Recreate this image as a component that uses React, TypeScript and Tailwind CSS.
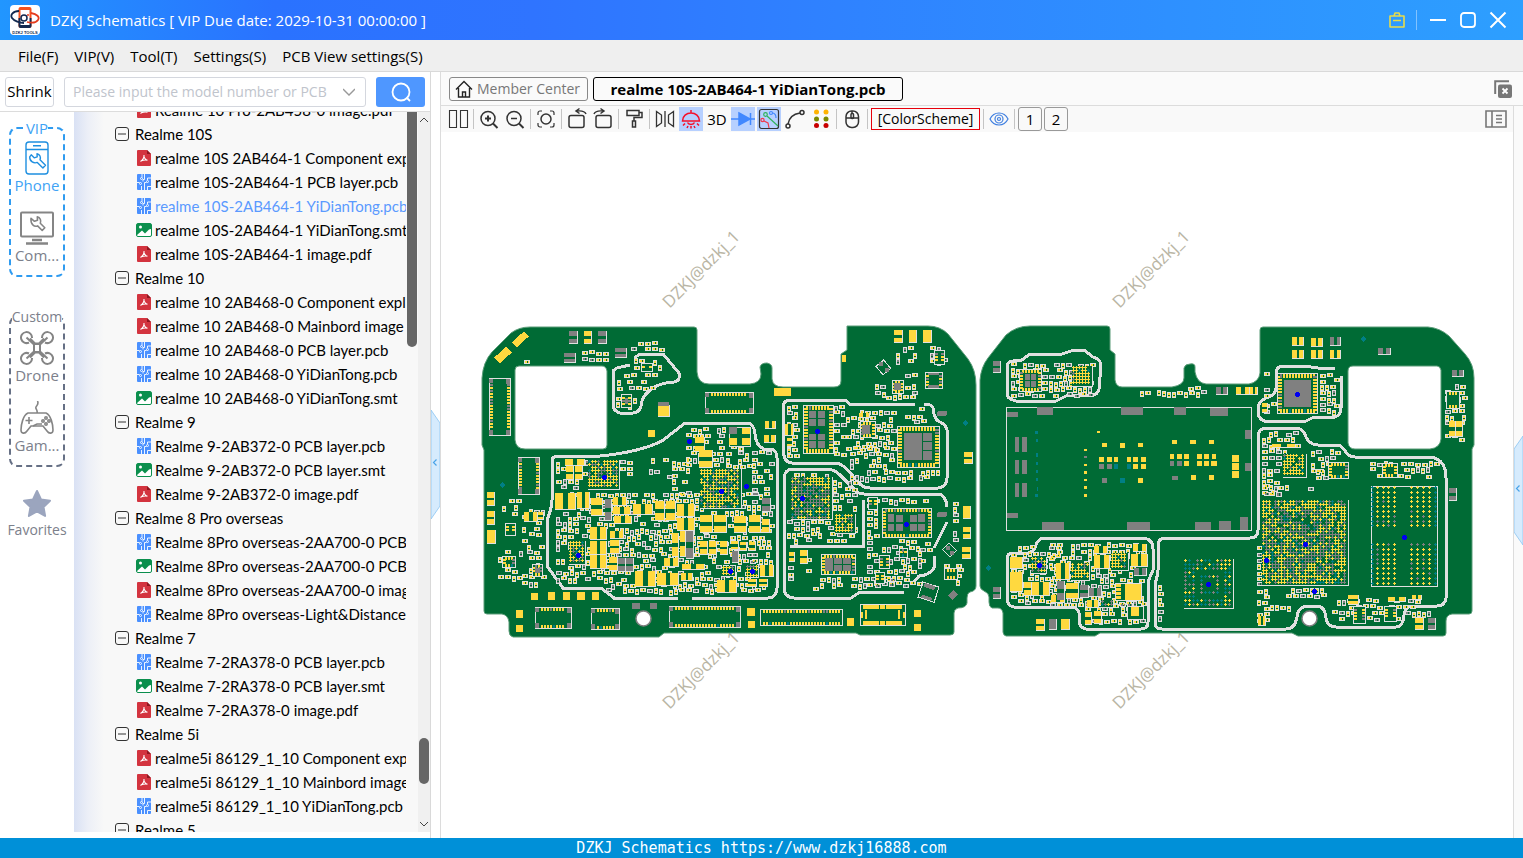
import { ReactNode } from "react";

const GREEN = "#006b35";
const LIGHT = "#e0e0e0";
const GOLD = "#ffd93f";
const GREY = "#808080";
const TEAL = "#007f85";
const LAYERS = [LIGHT, GREEN, GOLD, GREY, TEAL];

type Stage = Record<string, string>;
type Box = [number, number, number, number];

const newStage = (): Stage => ({
  [LIGHT]: "",
  [GREEN]: "",
  [GOLD]: "",
  [GREY]: "",
  [TEAL]: "",
});

function box(s: Stage, fill: string, x: number, y: number, w: number, h: number) {
  s[fill] += `M${x} ${y}h${w}v${h}h${-w}z`;
}

let seed = 7;
function random() {
  seed = (seed * 1664525 + 1013904223) % 4294967296;
  return seed / 4294967296;
}

// fields of tiny resistors and capacitors: x, y, w, h, density
const passives: [number, number, number, number, number][] = [
  [631, 340, 34, 10, 0.8],
  [582, 350, 30, 10, 0.8],
  [517, 353, 15, 9, 0.7],
  [634, 358, 34, 14, 0.7],
  [617, 373, 38, 18, 0.6],
  [616, 390, 20, 20, 0.6],
  [686, 427, 40, 40, 0.7],
  [726, 445, 26, 22, 0.7],
  [752, 450, 20, 140, 0.75],
  [556, 460, 32, 30, 0.6],
  [620, 460, 10, 20, 0.6],
  [632, 450, 40, 28, 0.15],
  [672, 455, 18, 40, 0.5],
  [556, 492, 200, 92, 0.75],
  [606, 582, 156, 13, 0.8],
  [502, 498, 18, 20, 0.5],
  [522, 508, 22, 78, 0.65],
  [498, 550, 26, 30, 0.75],
  [787, 404, 14, 52, 0.8],
  [834, 404, 14, 52, 0.8],
  [800, 455, 30, 6, 0.5],
  [846, 410, 48, 40, 0.7],
  [850, 445, 44, 38, 0.8],
  [900, 407, 28, 16, 0.5],
  [895, 469, 44, 14, 0.8],
  [787, 472, 44, 5, 0.7],
  [787, 520, 72, 24, 0.75],
  [833, 480, 24, 32, 0.7],
  [867, 498, 14, 90, 0.8],
  [882, 498, 50, 8, 0.8],
  [882, 539, 40, 46, 0.75],
  [920, 540, 12, 24, 0.6],
  [788, 565, 5, 16, 0.8],
  [806, 556, 14, 34, 0.4],
  [820, 576, 90, 12, 0.7],
  [875, 378, 16, 20, 0.7],
  [886, 394, 30, 5, 0.8],
  [905, 372, 14, 26, 0.6],
  [896, 346, 20, 18, 0.6],
  [930, 346, 24, 18, 0.5],
  [953, 500, 5, 42, 0.7],
  [944, 562, 18, 24, 0.6],
  [1011, 362, 82, 33, 0.9],
  [1011, 545, 50, 58, 0.7],
  [1050, 542, 94, 64, 0.65],
  [1085, 600, 58, 24, 0.7],
  [1140, 390, 70, 6, 0.8],
  [1188, 385, 22, 6, 0.7],
  [1158, 585, 4, 36, 0.9],
  [1262, 431, 36, 24, 0.8],
  [1262, 455, 18, 40, 0.9],
  [1264, 484, 28, 14, 0.7],
  [1303, 486, 16, 14, 0.6],
  [1311, 449, 28, 22, 0.7],
  [1316, 468, 10, 10, 0.8],
  [1370, 461, 68, 16, 0.7],
  [1286, 587, 44, 9, 0.8],
  [1257, 540, 5, 50, 0.8],
  [1257, 588, 14, 38, 0.7],
  [1270, 605, 24, 8, 0.8],
  [1332, 598, 98, 22, 0.7],
  [1320, 372, 17, 42, 0.85],
  [1264, 370, 8, 32, 0.8],
  [1264, 402, 10, 12, 0.8],
  [1445, 384, 20, 58, 0.8],
];

function drawPassives() {
  const s = newStage();
  for (const [x0, y0, w, h, density] of passives) {
    let row = y0;
    while (row + 3 <= y0 + h) {
      let col = x0;
      while (col + 3 <= x0 + w) {
        const tall = random() > 0.6 && row + 6 <= y0 + h + 1;
        const x = Math.round(col);
        const y = Math.round(row + random() * 2);
        const fill = random() > 0.22 ? GOLD : GREY;
        if (random() < density) {
          if (tall) {
            box(s, LIGHT, x, y, 4, 6);
            box(s, GREEN, x + 1, y + 1, 2, 4);
            box(s, fill, x + 1, y + 1, 2, 2);
            box(s, fill, x + 1, y + 4, 2, 1);
          } else {
            box(s, LIGHT, x, y, 6, 4);
            box(s, GREEN, x + 1, y + 1, 4, 2);
            box(s, fill, x + 1, y + 1, 2, 2);
            box(s, fill, x + 4, y + 1, 1, 2);
          }
        }
        col += tall ? 5 : 7;
      }
      row += 6;
    }
  }
  return s;
}

type Part = [number, number, number, number, "v" | "h" | "s", string?];

const parts: Part[] = [
  [569, 331, 9, 13, "v", GREY],
  [584, 331, 8, 13, "v"],
  [598, 331, 9, 13, "v", GREY],
  [564, 353, 12, 10, "v", GREY],
  [615, 348, 12, 10, "v", GREY],
  [894, 330, 9, 13, "v"],
  [909, 330, 8, 13, "s"],
  [923, 330, 9, 13, "s"],
  [658, 405, 12, 12, "s"],
  [765, 421, 11, 8, "h"],
  [764, 435, 12, 8, "h"],
  [785, 424, 9, 12, "h"],
  [787, 438, 6, 9, "v"],
  [964, 452, 9, 12, "v"],
  [963, 506, 8, 13, "s"],
  [963, 527, 8, 12, "v"],
  [962, 547, 9, 12, "v"],
  [487, 492, 8, 14, "v"],
  [487, 511, 8, 14, "v"],
  [487, 530, 9, 14, "s"],
  [695, 437, 10, 15, "v"],
  [699, 450, 14, 18, "v"],
  [565, 459, 20, 7, "h"],
  [566, 466, 8, 14, "v"],
  [575, 466, 8, 14, "v"],
  [555, 493, 21, 17, "h"],
  [577, 492, 13, 17, "h"],
  [591, 498, 12, 18, "v"],
  [605, 499, 7, 22, "v", GREY],
  [613, 497, 14, 9, "h"],
  [613, 507, 18, 8, "h"],
  [614, 516, 18, 8, "h"],
  [633, 504, 20, 11, "h"],
  [655, 501, 10, 20, "v"],
  [666, 501, 10, 20, "v"],
  [677, 504, 18, 13, "h"],
  [677, 518, 18, 13, "h"],
  [590, 527, 17, 13, "h"],
  [590, 541, 17, 14, "h"],
  [590, 555, 17, 14, "h"],
  [610, 531, 14, 8, "h"],
  [610, 540, 10, 14, "v"],
  [609, 557, 9, 14, "v"],
  [618, 558, 8, 14, "v", GREY],
  [626, 558, 8, 14, "v", GREY],
  [672, 533, 7, 24, "v"],
  [680, 531, 6, 26, "v"],
  [686, 531, 8, 28, "v", GREY],
  [664, 558, 15, 9, "h"],
  [700, 515, 13, 18, "v"],
  [714, 515, 13, 18, "v"],
  [734, 516, 13, 17, "v"],
  [749, 515, 12, 18, "v"],
  [762, 498, 9, 14, "v", GREY],
  [762, 519, 8, 14, "v"],
  [700, 541, 8, 14, "v"],
  [709, 541, 8, 14, "v"],
  [720, 541, 8, 14, "v"],
  [731, 541, 8, 9, "v"],
  [740, 542, 7, 9, "v"],
  [749, 542, 7, 9, "v"],
  [732, 551, 7, 12, "s", GREY],
  [682, 564, 23, 6, "h"],
  [635, 571, 21, 16, "h"],
  [657, 573, 22, 13, "h"],
  [681, 573, 12, 8, "h"],
  [717, 580, 20, 13, "h"],
  [760, 565, 14, 12, "h"],
  [748, 579, 9, 8, "v"],
  [759, 579, 9, 8, "v"],
  [524, 512, 14, 10, "h"],
  [538, 512, 6, 8, "v"],
  [789, 552, 6, 10, "v"],
  [800, 550, 8, 14, "v"],
  [859, 413, 11, 5, "h"],
  [993, 361, 8, 12, "v", GREY],
  [993, 587, 8, 12, "v", GREY],
  [1449, 488, 8, 13, "v", GREY],
  [1378, 348, 13, 7, "h", GREY],
  [1452, 370, 12, 7, "h", GREY],
  [1292, 337, 12, 9, "h"],
  [1311, 338, 12, 9, "h"],
  [1330, 337, 11, 9, "h", GREY],
  [1292, 350, 12, 9, "h"],
  [1311, 350, 12, 9, "h"],
  [1330, 350, 11, 9, "h"],
  [1036, 619, 9, 12, "v"],
  [1049, 619, 8, 11, "s", GREY],
  [1061, 619, 9, 11, "s"],
  [1415, 618, 9, 12, "v"],
  [1428, 618, 8, 12, "v", GREY],
  [1216, 387, 12, 8, "h", GREY],
  [1236, 387, 14, 8, "h"],
  [1250, 387, 8, 8, "h"],
  [1262, 403, 6, 10, "v"],
  [1010, 557, 13, 12, "s"],
  [1010, 572, 13, 20, "s"],
  [1056, 563, 14, 17, "h"],
  [1094, 546, 14, 8, "h"],
  [1094, 555, 16, 14, "h"],
  [1131, 554, 17, 13, "h"],
  [1133, 544, 14, 8, "h"],
  [1134, 568, 13, 8, "h", GREY],
  [1032, 582, 18, 14, "h"],
  [1024, 582, 8, 14, "v"],
  [1057, 581, 8, 20, "v", GREY],
  [1066, 583, 13, 16, "v"],
  [1080, 585, 9, 13, "v", GREY],
  [1089, 588, 13, 9, "h", GREY],
  [1051, 595, 14, 8, "h"],
  [1085, 612, 7, 13, "v"],
  [1094, 611, 8, 13, "v"],
  [1087, 600, 12, 8, "h"],
  [1449, 421, 7, 16, "v"],
  [1456, 421, 7, 16, "v"],
  [1258, 616, 8, 10, "h"],
  [1272, 444, 24, 4, "h"],
  [1348, 595, 11, 10, "v"],
  [1388, 597, 18, 5, "h"],
  [1412, 595, 10, 5, "h"],
];

function drawParts() {
  const s = newStage();
  for (const [x, y, w, h, dir, fill = GOLD] of parts) {
    box(s, LIGHT, x, y, w, h);
    if (dir === "s") {
      box(s, fill, x, y, w - 1, h - 1);
    } else if (dir === "v") {
      const pad = Math.floor((h - 2) * 0.42);
      box(s, GREEN, x, y + 1, w - 1, h - 2);
      box(s, fill, x, y, w - 1, pad + 1);
      box(s, fill, x, y + h - 1 - pad, w - 1, pad);
    } else {
      const pad = Math.floor((w - 2) * 0.4);
      box(s, GREEN, x + 1, y, w - 2, h - 1);
      box(s, fill, x, y, pad + 1, h - 1);
      box(s, fill, x + w - 1 - pad, y, pad, h - 1);
    }
  }
  return s;
}

const solids: [string, number, number, number, number][] = [
  [GOLD, 774, 388, 17, 8],
  [GOLD, 842, 355, 4, 7],
  [GOLD, 648, 430, 7, 7],
  [GREY, 658, 402, 11, 4],
  [GOLD, 531, 593, 7, 7],
  [GOLD, 548, 592, 7, 8],
  [GOLD, 563, 592, 7, 8],
  [GOLD, 577, 592, 8, 8],
  [GOLD, 592, 592, 7, 8],
  [GOLD, 516, 610, 7, 8],
  [GOLD, 516, 625, 7, 7],
  [GOLD, 747, 608, 8, 8],
  [GOLD, 748, 621, 7, 7],
  [GOLD, 847, 618, 7, 8],
  [GOLD, 914, 610, 7, 7],
  [GOLD, 914, 624, 7, 7],
  [GREY, 632, 603, 8, 6],
  [GREY, 650, 603, 7, 6],
  [GREY, 1037, 407, 16, 8],
  [GREY, 1121, 407, 22, 8],
  [GREY, 1174, 407, 12, 8],
  [GREY, 1210, 408, 18, 8],
  [GREY, 1042, 522, 22, 8],
  [GREY, 1127, 522, 23, 8],
  [GREY, 1195, 522, 16, 8],
  [GREY, 1219, 521, 12, 9],
  [GREY, 1240, 517, 8, 13],
  [GREY, 1245, 430, 6, 9],
  [GREY, 1245, 463, 6, 8],
  [GREY, 1007, 412, 11, 5],
  [GREY, 1007, 513, 11, 5],
  [GREY, 1015, 437, 4, 15],
  [GREY, 1022, 437, 5, 15],
  [GREY, 1015, 460, 4, 14],
  [GREY, 1022, 460, 5, 14],
  [GREY, 1015, 483, 4, 14],
  [GREY, 1022, 483, 5, 14],
  [GOLD, 1097, 431, 3, 2],
  [GOLD, 1102, 443, 5, 4],
  [GOLD, 1120, 443, 5, 5],
  [GOLD, 1138, 443, 5, 4],
  [GOLD, 1099, 457, 5, 5],
  [GOLD, 1107, 457, 5, 5],
  [GOLD, 1114, 457, 4, 5],
  [GOLD, 1127, 457, 4, 5],
  [GOLD, 1133, 457, 5, 5],
  [GOLD, 1141, 457, 5, 5],
  [GREY, 1099, 464, 5, 5],
  [GREY, 1107, 464, 5, 5],
  [TEAL, 1114, 464, 4, 5],
  [TEAL, 1127, 464, 4, 5],
  [GOLD, 1133, 464, 5, 5],
  [GOLD, 1141, 464, 5, 5],
  [GREY, 1102, 478, 5, 5],
  [TEAL, 1120, 478, 5, 5],
  [GOLD, 1138, 478, 5, 5],
  [GOLD, 1172, 440, 5, 4],
  [GOLD, 1190, 440, 6, 4],
  [GOLD, 1209, 440, 5, 4],
  [GOLD, 1170, 454, 4, 5],
  [GOLD, 1177, 454, 5, 5],
  [GOLD, 1184, 454, 5, 5],
  [GOLD, 1197, 454, 5, 5],
  [GOLD, 1204, 454, 5, 5],
  [GOLD, 1212, 454, 4, 5],
  [GREY, 1170, 461, 4, 5],
  [GREY, 1177, 461, 5, 5],
  [GOLD, 1184, 461, 5, 5],
  [GOLD, 1197, 461, 5, 5],
  [GOLD, 1204, 461, 5, 5],
  [GOLD, 1211, 461, 6, 5],
  [GREY, 1172, 476, 6, 4],
  [GOLD, 1191, 475, 5, 5],
  [GOLD, 1209, 475, 5, 5],
  [GOLD, 1232, 455, 7, 7],
  [GOLD, 1232, 463, 7, 7],
  [GOLD, 1232, 471, 7, 7],
  [GOLD, 1084, 449, 3, 2],
  [GREY, 1084, 456, 3, 2],
  [GOLD, 1084, 464, 3, 2],
  [GOLD, 1084, 471, 3, 3],
  [GOLD, 1084, 479, 3, 2],
  [GOLD, 1084, 486, 3, 3],
  [GOLD, 1084, 494, 3, 3],
  [TEAL, 1035, 431, 3, 3],
  [TEAL, 1036, 439, 2, 3],
  [TEAL, 1036, 453, 2, 4],
  [TEAL, 1036, 462, 2, 3],
  [TEAL, 1036, 470, 2, 3],
  [TEAL, 1036, 478, 2, 3],
  [TEAL, 1037, 487, 1, 4],
  [TEAL, 1035, 494, 3, 3],
];

// chips with a row of pads on each side; cores are the thermal pads
const chips: { at: Box; sides: "h" | "v" | "hv"; cores?: Box[]; corners?: boolean }[] = [
  { at: [489, 378, 22, 58], sides: "v", corners: true },
  { at: [518, 457, 22, 38], sides: "v", corners: true },
  { at: [705, 392, 49, 22], sides: "h", corners: true },
  { at: [535, 607, 37, 22], sides: "h", corners: true },
  { at: [591, 608, 29, 22], sides: "h", corners: true },
  { at: [669, 606, 72, 22], sides: "h", corners: true },
  { at: [760, 609, 83, 17], sides: "h" },
  {
    at: [803, 405, 31, 49],
    sides: "hv",
    cores: [
      [809, 411, 7, 7],
      [818, 411, 7, 7],
      [809, 419, 7, 7],
      [818, 419, 7, 7],
      [809, 434, 7, 6],
      [818, 434, 7, 6],
      [809, 441, 7, 7],
      [818, 441, 7, 7],
    ],
  },
  {
    at: [897, 426, 43, 42],
    sides: "hv",
    cores: [
      [904, 433, 18, 27],
      [923, 433, 9, 8],
      [923, 442, 9, 8],
      [923, 451, 9, 9],
    ],
  },
  { at: [860, 421, 16, 17], sides: "hv", cores: [[862, 425, 8, 9]] },
  { at: [892, 380, 12, 14], sides: "hv", cores: [[894, 383, 7, 7]] },
  { at: [925, 372, 18, 17], sides: "v", cores: [[928, 373, 11, 2], [928, 385, 11, 3]] },
  { at: [934, 350, 11, 15], sides: "v" },
  {
    at: [882, 508, 50, 30],
    sides: "hv",
    cores: [
      [888, 514, 6, 8],
      [896, 515, 7, 7],
      [910, 515, 7, 7],
      [918, 514, 7, 8],
      [888, 524, 6, 7],
      [896, 524, 7, 7],
      [910, 524, 7, 7],
      [918, 524, 7, 7],
    ],
  },
  {
    at: [821, 554, 35, 21],
    sides: "hv",
    cores: [
      [825, 558, 8, 13],
      [834, 558, 8, 6],
      [843, 558, 8, 6],
      [834, 565, 8, 6],
      [843, 565, 8, 6],
    ],
  },
  { at: [505, 523, 11, 13], sides: "v" },
  { at: [502, 556, 14, 12], sides: "hv" },
  { at: [532, 564, 11, 13], sides: "hv", cores: [[535, 568, 5, 5]] },
  { at: [641, 363, 12, 9], sides: "v" },
  { at: [621, 394, 11, 14], sides: "v", cores: [[625, 398, 3, 6]] },
  { at: [944, 568, 14, 12], sides: "h" },
  { at: [868, 497, 10, 13], sides: "v" },
  { at: [879, 555, 11, 14], sides: "v" },
  { at: [875, 572, 10, 12], sides: "v" },
  { at: [899, 548, 9, 10], sides: "hv" },
  {
    at: [1019, 369, 23, 23],
    sides: "hv",
    cores: [
      [1025, 374, 5, 6],
      [1031, 374, 5, 6],
      [1025, 381, 5, 6],
      [1031, 381, 5, 6],
    ],
  },
  { at: [1277, 373, 41, 41], sides: "hv", cores: [[1284, 380, 27, 27]] },
  { at: [1328, 462, 21, 17], sides: "hv" },
  { at: [1382, 463, 16, 15], sides: "hv" },
  { at: [1446, 391, 14, 18], sides: "h" },
  { at: [1353, 606, 13, 18], sides: "v" },
  { at: [1384, 606, 13, 16], sides: "v" },
];

function drawChips() {
  const s = newStage();
  for (const { at, sides, cores = [], corners } of chips) {
    const [x, y, w, h] = at;
    const len = w > 30 && h > 30 ? 4 : 3;
    const inset = corners ? 6 : 3;
    box(s, LIGHT, x, y, w, h);
    box(s, GREEN, x + 1, y + 1, w - 2, h - 2);
    if (sides !== "v") {
      for (let i = x + inset; i < x + w - inset - 1; i += 3) {
        box(s, random() > 0.15 ? GOLD : GREY, i, y + 1, 2, len);
        box(s, random() > 0.15 ? GOLD : TEAL, i, y + h - 1 - len, 2, len);
      }
    }
    if (sides !== "h") {
      for (let i = y + inset; i < y + h - inset - 1; i += 3) {
        box(s, random() > 0.2 ? GOLD : GREY, x + 1, i, len, 2);
        box(s, random() > 0.2 ? GOLD : GREY, x + w - 1 - len, i, len, 2);
      }
    }
    if (corners) {
      box(s, GREY, x, y + 1, 4, 4);
      box(s, GREY, x + w - 5, y + 1, 4, 5);
      box(s, GREY, x, y + h - 6, 4, 5);
      box(s, GREY, x + w - 5, y + h - 6, 4, 5);
    }
    for (const c of cores) box(s, GREY, ...c);
  }
  // battery connector with long bars
  box(s, LIGHT, 860, 604, 46, 22);
  box(s, GREEN, 861, 605, 44, 20);
  box(s, GOLD, 863, 605, 16, 4);
  box(s, GOLD, 880, 605, 5, 4);
  box(s, GOLD, 886, 605, 16, 4);
  box(s, GOLD, 863, 621, 16, 4);
  box(s, GOLD, 880, 621, 5, 4);
  box(s, GOLD, 886, 621, 16, 4);
  box(s, GOLD, 861, 612, 2, 6);
  box(s, GOLD, 903, 612, 2, 6);
  box(s, GOLD, 865, 610, 2, 9);
  box(s, GOLD, 898, 610, 2, 9);
  // four-pad crystal
  box(s, LIGHT, 729, 427, 22, 20);
  box(s, GREEN, 730, 428, 20, 18);
  box(s, GREY, 729, 427, 8, 7);
  box(s, GOLD, 742, 428, 8, 6);
  box(s, GOLD, 729, 438, 8, 7);
  box(s, GOLD, 742, 438, 8, 7);
  // power inductor
  box(s, LIGHT, 1115, 583, 27, 18);
  box(s, GREEN, 1116, 584, 25, 16);
  box(s, GOLD, 1125, 584, 16, 16);
  for (let i = 0; i < 4; i++) box(s, GOLD, 1116, 584 + i * 4, 5, 3);
  box(s, LIGHT, 1127, 606, 17, 14);
  box(s, GREEN, 1128, 607, 15, 12);
  box(s, GOLD, 1131, 607, 8, 9);
  for (const [fill, ...b] of solids) box(s, fill, ...b);
  return s;
}

// ball grids: x, y, w, h, pitch, share of grey balls, ring only
const grids: [number, number, number, number, number, number, boolean?][] = [
  [588, 460, 32, 30, 3, 0.3],
  [700, 469, 42, 40, 3, 0.35],
  [569, 541, 17, 24, 3, 0.2],
  [722, 566, 14, 11, 3, 0.2],
  [746, 565, 13, 13, 3, 0.2],
  [791, 477, 42, 43, 3, 0.6],
  [835, 514, 21, 20, 3, 0.3],
  [1072, 366, 21, 21, 3, 0.3],
  [1031, 557, 16, 17, 3, 0.4],
  [1071, 563, 19, 18, 3, 0.1],
  [1111, 553, 18, 18, 3, 0.1],
  [1101, 600, 13, 8, 3, 0.3],
  [1283, 454, 24, 24, 3, 0.2],
  [1262, 500, 87, 86, 3, 0.42],
  [1184, 559, 50, 50, 4, 0.4, true],
];

function drawGrids() {
  const s = newStage();
  const ball = (fill: string, x: number, y: number) => {
    box(s, fill, x, y + 1, 3, 1);
    box(s, fill, x + 1, y, 1, 3);
  };
  for (const [x, y, w, h, pitch, grey, ring] of grids) {
    box(s, LIGHT, x, y, w, h);
    box(s, GREEN, x, y, w - 1, h - 1);
    for (let i = 0; i + 4 <= w; i += pitch) {
      for (let j = 0; j + 4 <= h; j += pitch) {
        const edge = Math.min(i, j, w - i - 4, h - j - 4);
        if (ring && edge > 9 && (edge < 13 || edge > 17)) continue;
        if (random() < 0.08) continue;
        // ground balls sit towards the middle
        const share = edge > 8 ? grey * 1.4 : grey * 0.7;
        const r = random();
        ball(r < share ? GREY : r < share + (ring ? 0.35 : 0.08) ? TEAL : GOLD, x + i, y + j);
      }
    }
  }
  // memory footprint, four blocks
  box(s, LIGHT, 1371, 486, 67, 101);
  box(s, GREEN, 1372, 487, 65, 99);
  for (const x of [1371, 1376, 1382, 1387, 1393, 1410, 1416, 1422, 1428, 1434]) {
    for (let j = 0; j < 18; j++) {
      const y = (j < 9 ? 486 : 500) + Math.round(j * 4.8);
      const r = random();
      ball(x === 1371 || x === 1434 ? TEAL : r < 0.15 ? GREY : GOLD, x, y);
    }
  }
  return s;
}

const stages = [drawPassives(), drawParts(), drawChips(), drawGrids()];

const dots = [
  [604, 477], [689, 441], [721, 491], [746, 486], [578, 555],
  [730, 571], [752, 571], [817, 431], [802, 498], [906, 524],
  [1297, 394], [1039, 565], [1208, 584], [1305, 544], [1266, 560],
  [1314, 591], [1404, 537],
];

const walls = [
  "M634 358L640 354H663L679 373Q681 381 674 382Q655 383 646 394Q641 400 641 406Q639 413 633 413H620Q613 411 613 404V371L617 368L630 365",
  "M678 598H614L601 588H563L547 566V520Q552 508 552 500V460Q553 456 558 456H600Q640 452 662 441L685 423H748Q754 424 755 434Q756 446 764 449H771Q777 450 777 458V588Q776 598 768 598H692",
  "M915 404H850L845 400H790Q783 400 783 408V450Q784 463 792 463H836Q842 463 852 475L860 484Q864 488 870 488H938Q947 487 947 478V430Q946 424 938 421Q934 418 933 408Q932 404 924 404",
  "M904 592H860L851 598H794Q784 597 784 588V478Q785 469 793 469H828Q836 470 843 478L856 491Q859 494 864 494H938Q946 495 947 507",
  "M863 500V546H790",
  "M947 522L934 548M934 556V568Q930 575 919 576L912 584",
  "M1007 366Q1008 361 1013 361L1022 360L1030 354H1062L1074 350H1084L1093 357Q1101 359 1101 366L1099 389Q1098 395 1091 395L1066 396L1056 401H1016Q1007 399 1007 394Z",
  "M1007 559Q1007 553 1013 553H1028Q1034 552 1036 545Q1038 539 1044 538H1143Q1153 539 1153 549V570L1148 582V622Q1148 629 1141 629H1086Q1080 628 1079 621V613Q1078 608 1072 607H1014Q1007 606 1007 598Z",
  "M1155 584Q1158 574 1158 570V546Q1158 538 1165 538H1250Q1258 538 1258 530V436Q1259 428 1266 428H1296Q1303 428 1306 437Q1310 445 1318 445H1338Q1342 446 1346 452Q1349 457 1355 457H1430Q1446 459 1446 478V598Q1445 606 1437 606H1411Q1405 607 1404 615Q1403 627 1396 627H1336Q1327 627 1326 618Q1325 606 1316 606H1307Q1298 607 1297 617Q1295 629 1286 629H1162Q1155 629 1155 622Z",
  "M1335 369L1318 368L1304 366H1282Q1276 367 1276 374V388Q1275 396 1266 398Q1258 402 1258 408V414Q1260 421 1268 422L1306 421L1314 417H1335Q1341 415 1341 408V376",
];

const watermarks = [[702, 270], [1152, 270], [702, 671], [1152, 671]];

function BoardView() {
  return (
    <svg
      role="img"
      aria-label="realme 10S-2AB464-1 board"
      viewBox="441 132 1072 706"
      className="block h-full w-full"
    >
      {watermarks.map(([x, y]) => (
        <text
          key={`${x}-${y}`}
          x={x}
          y={y}
          textAnchor="middle"
          dominantBaseline="middle"
          transform={`rotate(-45 ${x} ${y})`}
          fill="#b9b5a4"
          className="font-['Open_Sans',sans-serif] text-[17px]"
        >
          DZKJ@dzkj_1
        </text>
      ))}
      <g fill={GREEN} stroke="#5a9c78" strokeWidth="1" fillRule="evenodd">
        <path d="M530 327H694Q697 327 697 330V372Q698 384 709 384H750Q761 383 761 374L760 367Q761 363 767 363Q772 364 772 368V379Q773 387 783 387H834Q841 387 841 381V354L847 350V326H928Q940 326 948 334L968 359Q976 370 976 385V586Q976 591 970 592Q967 593 967 598V603Q966 608 958 608Q954 609 954 613V632Q954 635 950 635H860L856 633H664L659 637H513Q509 636 509 631V622Q508 615 502 614H487Q484 614 484 611V450L482 445V378Q483 362 492 352L511 333Q519 327 530 327ZM519 366Q515 366 515 370V440Q516 449 525 449H603Q607 449 607 445V371Q606 366 602 366Z" />
        <path d="M1030 326H1107Q1110 326 1110 329V350L1115 354V380Q1116 387 1122 387H1172Q1184 385 1184 378V368Q1185 364 1190 364Q1195 363 1195 367V372Q1197 383 1206 384H1249Q1259 382 1260 373V330Q1260 327 1263 327H1428Q1440 328 1449 336L1465 354Q1474 364 1474 378V445L1472 449V611Q1472 614 1469 614H1452Q1446 615 1446 621V633Q1446 636 1443 636H1298L1292 633H1100L1095 636H1006Q1003 635 1003 632V613Q1002 608 998 608H992Q989 607 989 602V597Q989 593 984 591Q980 589 980 586V380Q981 367 988 358L1006 335Q1016 326 1030 326ZM1353 366Q1348 366 1348 371V443Q1349 449 1355 449H1430Q1440 448 1441 439V370Q1440 366 1437 366Z" />
      </g>
      <g shapeRendering="crispEdges">
        <g fill="none" stroke={LIGHT} strokeWidth="3">
          {walls.map((d) => (
            <path key={d} d={d} />
          ))}
        </g>
        <rect x="1006.5" y="407.5" width="245" height="123" fill="none" stroke={LIGHT} />
        {stages.map((stage, i) => (
          <g key={i}>
            {LAYERS.map((fill) => (
              <path key={fill} fill={fill} d={stage[fill]} />
            ))}
          </g>
        ))}
        <g fill={GOLD}>
          <rect x="495" y="351" width="16" height="8" transform="rotate(-42 503 355)" />
          <rect x="512" y="336" width="16" height="7" transform="rotate(-42 520 339)" />
        </g>
        <g fill="none" stroke={LIGHT}>
          <rect x="878" y="362" width="10" height="11" transform="rotate(-40 883 367)" />
          <rect x="945" y="544" width="9" height="11" transform="rotate(-45 950 550)" />
          <rect x="920" y="584" width="17" height="16" transform="rotate(18 928 592)" />
        </g>
        <g fill={GREY}>
          <rect x="879" y="362" width="4" height="4" />
          <rect x="885" y="368" width="4" height="4" />
          <rect x="946" y="546" width="4" height="4" />
          <rect x="950" y="551" width="4" height="4" />
          <rect x="924" y="584" width="11" height="4" transform="rotate(18 928 586)" />
          <rect x="921" y="596" width="11" height="3" transform="rotate(18 926 598)" />
          <rect x="949" y="592" width="8" height="6" transform="rotate(-45 953 595)" />
          <rect x="937" y="411" width="10" height="5" rx="2" />
          <rect x="937" y="512" width="10" height="5" rx="2" />
        </g>
        <path
          fill={TEAL}
          d="M502 482l3 3-3 3-3-3zM965 420l3 3-3 3-3-3zM988 565l3 3-3 3-3-3zM1363 336l3 3-3 3-3-3z"
        />
        <g fill="#0000f0">
          {dots.map(([x, y]) => (
            <circle key={`${x}-${y}`} cx={x + 0.5} cy={y + 0.5} r="2.5" />
          ))}
        </g>
      </g>
      <g fill="#fff" stroke={GREY} strokeWidth="1.5">
        <circle cx="643.5" cy="618.5" r="7.5" />
        <circle cx="1309.5" cy="618.5" r="7.5" />
      </g>
    </svg>
  );
}

type FileKind = "pdf" | "pcb" | "smt";

const tree: { name: string; files: [FileKind, string][] }[] = [
  {
    name: "Realme 10S",
    files: [
      ["pdf", "realme 10S 2AB464-1 Component exp"],
      ["pcb", "realme 10S-2AB464-1 PCB layer.pcb"],
      ["pcb", "realme 10S-2AB464-1 YiDianTong.pcb"],
      ["smt", "realme 10S-2AB464-1 YiDianTong.smt"],
      ["pdf", "realme 10S-2AB464-1 image.pdf"],
    ],
  },
  {
    name: "Realme 10",
    files: [
      ["pdf", "realme 10 2AB468-0 Component expl"],
      ["pdf", "realme 10 2AB468-0 Mainbord image"],
      ["pcb", "realme 10 2AB468-0 PCB layer.pcb"],
      ["pcb", "realme 10 2AB468-0 YiDianTong.pcb"],
      ["smt", "realme 10 2AB468-0 YiDianTong.smt"],
    ],
  },
  {
    name: "Realme 9",
    files: [
      ["pcb", "Realme 9-2AB372-0 PCB layer.pcb"],
      ["smt", "Realme 9-2AB372-0 PCB layer.smt"],
      ["pdf", "Realme 9-2AB372-0 image.pdf"],
    ],
  },
  {
    name: "Realme 8 Pro overseas",
    files: [
      ["pcb", "Realme 8Pro overseas-2AA700-0 PCB"],
      ["smt", "Realme 8Pro overseas-2AA700-0 PCB"],
      ["pdf", "Realme 8Pro overseas-2AA700-0 imag"],
      ["pcb", "Realme 8Pro overseas-Light&Distance"],
    ],
  },
  {
    name: "Realme 7",
    files: [
      ["pcb", "Realme 7-2RA378-0 PCB layer.pcb"],
      ["smt", "Realme 7-2RA378-0 PCB layer.smt"],
      ["pdf", "Realme 7-2RA378-0 image.pdf"],
    ],
  },
  {
    name: "Realme 5i",
    files: [
      ["pdf", "realme5i 86129_1_10 Component exp"],
      ["pdf", "realme5i 86129_1_10 Mainbord image"],
      ["pcb", "realme5i 86129_1_10 YiDianTong.pcb"],
    ],
  },
  { name: "Realme 5", files: [] },
];

const activeFile = "realme 10S-2AB464-1 YiDianTong.pcb";

function FileIcon({ kind }: { kind: FileKind }) {
  if (kind === "pdf") {
    return (
      <svg viewBox="0 0 16 16" className="size-4 shrink-0">
        <path d="M2 0h9l4 4v11a1 1 0 0 1-1 1H2a1 1 0 0 1-1-1V1a1 1 0 0 1 1-1z" fill="#d3343f" />
        <path d="M11 0l4 4h-4z" fill="#8f1720" />
        <path
          d="M8 5c.2 2-1.300 5-3.500 6.500M8 7c.8 2 2 3 3.500 3.300M5.500 10.800c2-.8 4-1 6-.5"
          fill="none"
          stroke="#fff"
          strokeWidth="1.1"
        />
      </svg>
    );
  }
  if (kind === "pcb") {
    return (
      <svg viewBox="0 0 16 16" className="size-4 shrink-0">
        <rect x="1" width="14" height="16" rx="1" fill="#4a90ff" />
        <g fill="none" stroke="#fff" strokeWidth="0.9">
          <path d="M6 0v3.500M1 8.500h2.500M7 7.500V5.500h1.500V0M8.500 16V8.500h2M5.500 16v-4M11.500 16v-3.500h3.500M15 4h-3.500V6" />
          <circle cx="5.5" cy="4.5" r="1" />
          <circle cx="11.5" cy="7.5" r="1" />
          <circle cx="4.5" cy="9.5" r="1" />
        </g>
      </svg>
    );
  }
  return (
    <svg viewBox="0 0 16 16" className="size-4 shrink-0">
      <rect x="0.5" y="1.5" width="15" height="13" rx="1.5" fill="#fff" stroke="#0b8f4d" />
      <path d="M1 2h14v5l-2 .5-4 4-3-3L1 13z" fill="#0b8f4d" />
      <circle cx="4.5" cy="5" r="1.5" fill="#fff" />
    </svg>
  );
}

function FileRow({ kind, name }: { kind: FileKind; name: string }) {
  return (
    <button
      type="button"
      className={`flex h-6 w-full items-center gap-[3px] overflow-hidden pl-[62px] text-left leading-6 whitespace-nowrap ${
        name === activeFile ? "text-[#5b9aff]" : "text-black"
      }`}
    >
      <FileIcon kind={kind} />
      {name}
    </button>
  );
}

function Tree() {
  return (
    <div className="flex min-w-0 flex-1 bg-[linear-gradient(90deg,#d9e1f4_0,#eceff7_14px,#f8f8f8_30px)] font-['Lato','Open_Sans',sans-serif]">
      <div className="min-w-0 flex-1 overflow-hidden">
        <div className="-mt-[14px]">
          <FileRow kind="pdf" name="Realme 10 Pro-2AB458-0 image.pdf" />
          {tree.map((group) => (
            <div key={group.name}>
              <button type="button" className="flex h-6 w-full items-center gap-1.5 pl-[41px] text-left leading-6 text-black">
                <svg viewBox="0 0 14 14" className="size-3.5">
                  <rect x="0.5" y="0.5" width="13" height="13" rx="2.5" fill="none" stroke="#333" />
                  <path d="M3 7h8" stroke="#333" />
                </svg>
                {group.name}
              </button>
              {group.files.map(([kind, name], i) => (
                <FileRow key={i} kind={kind} name={name} />
              ))}
            </div>
          ))}
        </div>
      </div>
      <div className="w-3">
        <div className="ml-px h-[235px] w-2.5 rounded-b-full bg-[#666]" />
      </div>
      <div className="flex w-3 flex-col items-center justify-between bg-[#f0f0f0] py-1">
        <svg viewBox="0 0 10 8" className="h-2 w-2.5">
          <path d="M1 6l4-4 4 4" fill="none" stroke="#444" />
        </svg>
        <div className="mt-auto mb-9 h-[46px] w-2.5 rounded-full bg-[#666]" />
        <svg viewBox="0 0 10 8" className="h-2 w-2.5">
          <path d="M1 2l4 4 4-4" fill="none" stroke="#444" />
        </svg>
      </div>
    </div>
  );
}

function RailItem({ label, className, children }: { label: string; className?: string; children: ReactNode }) {
  return (
    <button
      type="button"
      className={`flex h-[70px] w-full flex-col items-center leading-5 ${className ?? "text-[15px] text-[#7c808b]"}`}
    >
      {children}
      {label}
    </button>
  );
}

function Rail() {
  return (
    <nav className="flex w-[74px] shrink-0 flex-col items-center bg-white pt-1.5">
      <fieldset className="h-[159px] w-14 min-w-0 rounded-lg border-2 border-dashed border-[#2f9bf0]">
        <legend className="mx-auto text-[15px] leading-5 text-[#3fa3f5]">VIP</legend>
        <RailItem label="Phone" className="-mt-px text-[15px] text-[#3fa3f5]">
          <svg viewBox="0 0 34 34" className="mt-1 size-[34px] shrink-0" fill="none" stroke="#1e8fe0" strokeWidth="1.4">
            <rect x="6" y="1" width="22" height="32" rx="3" />
            <path d="M6 8.500h22M13 4.800h8" />
            <path
              d="M12.200 13.300l3 3 3-1-.2-3c3 .6 4 3.400 3 6l5.500 5.500-2.600 2.700-5.600-5.600c-3.300 1.300-7.800-.6-7.600-5.600z"
              transform="translate(-1 .5)"
              strokeLinejoin="round"
            />
          </svg>
        </RailItem>
        <RailItem label="Com...">
          <svg viewBox="0 0 34 34" className="mt-1 size-[34px] shrink-0" fill="none" stroke="#858585" strokeWidth="2">
            <rect x="1" y="1.5" width="32" height="24" rx="1" />
            <path d="M12 29h10M6 32.500h22" strokeWidth="2.5" />
            <path
              d="M11 7.300l3.500 3 3-1-.2-3.500c3 .6 4 3.900 3 6.500l4.500 4.500-2.600 2.700-4.600-4.600c-3.300 1.300-7.300-1.600-6.600-7.600z"
              strokeWidth="1.6"
              strokeLinejoin="round"
            />
          </svg>
        </RailItem>
      </fieldset>
      <fieldset className="mt-[30px] h-[160px] w-14 min-w-0 rounded-lg border-2 border-dashed border-[#667085]">
        <legend className="mx-auto text-sm leading-5 text-[#7c808b]">Custom</legend>
        <RailItem label="Drone">
          <svg viewBox="0 0 34 34" className="mt-1 size-[34px] shrink-0" fill="none" stroke="#858585" strokeWidth="2">
            <path d="M9 11.500A5.500 5.500 0 1 1 12 7M25 11.500A5.500 5.500 0 1 0 22 7M9 22.500A5.500 5.500 0 1 0 12 27M25 22.500A5.500 5.500 0 1 1 22 27" />
            <path d="M6.500 6.500l7.500 7M27.500 6.500l-7.500 7M6.500 27.500l7.500-7M27.500 27.500l-7.500-7M10 7.500l5 5h4l5-5M10 26.500l5-5h4l5 5" />
            <rect x="14" y="13" width="6" height="8" />
          </svg>
        </RailItem>
        <RailItem label="Gam...">
          <svg viewBox="0 0 34 34" className="mt-1 size-[34px] shrink-0" fill="none" stroke="#858585" strokeWidth="1.6">
            <path d="M17 12c1-3-2-4-1-6s3-3 1.500-6M8 12h18c5 2 7 12 7 17 0 4-4 4-6 1l-4-5H11l-4 5c-2 3-6 3-6-1 0-5 2-15 7-17z" />
            <path d="M9 16v7M5.500 19.500h7M13 25l4-2h5" />
            <circle cx="26" cy="17" r="1.2" />
            <circle cx="26" cy="23" r="1.2" />
            <circle cx="23" cy="20" r="1.2" />
            <circle cx="29" cy="20" r="1.2" />
          </svg>
        </RailItem>
      </fieldset>
      <div className="mt-[21px]">
        <RailItem label="Favorites" className="text-sm text-[#7c808b]">
          <svg viewBox="0 0 32 32" className="size-8 shrink-0">
            <path
              d="M16 3l4 8.500 9 1.200-6.500 6.300 1.600 9L16 23.500 7.900 28l1.600-9L3 12.700l9-1.200z"
              fill="#9ba5be"
              stroke="#9ba5be"
              strokeWidth="2"
              strokeLinejoin="round"
            />
          </svg>
        </RailItem>
      </div>
    </nav>
  );
}

function ToolButton({ label, active, children }: { label: string; active?: boolean; children: ReactNode }) {
  return (
    <button
      type="button"
      aria-label={label}
      className={`flex size-6 shrink-0 items-center justify-center ${active ? "bg-[#b7d0ff]" : ""}`}
    >
      <svg viewBox="0 0 24 24" className="size-6" fill="none" stroke="#333" strokeWidth="1.5">
        {children}
      </svg>
    </button>
  );
}

const Separator = () => <div className="mx-px h-5 w-px shrink-0 bg-[#c4c4c4]" />;

function Toolbar() {
  return (
    <div className="flex h-[26px] items-center gap-0.5 bg-[#f9f9f9] pr-1.5 pl-[5px] text-[15px] text-black">
      <ToolButton label="Split view">
        <path d="M3.500 3.500h7v17h-7zM14.500 3.500h7v17h-7z" strokeWidth="1.1" />
      </ToolButton>
      <Separator />
      <ToolButton label="Zoom in">
        <circle cx="11" cy="11.5" r="7" />
        <path d="M16 16.500l4.500 4.500" strokeWidth="2" />
        <path d="M8 11.500h6M11 8.500v6" strokeWidth="2" />
      </ToolButton>
      <ToolButton label="Zoom out">
        <circle cx="11" cy="11.5" r="7" />
        <path d="M16 16.500l4.500 4.500" strokeWidth="2" />
        <path d="M8 11.500h6" />
      </ToolButton>
      <Separator />
      <ToolButton label="Fit to window">
        <circle cx="12" cy="12" r="5" />
        <path d="M8 4H6a2 2 0 0 0-2 2v2M16 4h2a2 2 0 0 1 2 2v2M8 20H6a2 2 0 0 1-2-2v-2M16 20h2a2 2 0 0 0 2-2v-2" strokeWidth="1.2" />
      </ToolButton>
      <Separator />
      <ToolButton label="Rotate left">
        <rect x="4" y="8.5" width="15" height="12" rx="2" />
        <path d="M21 7c-1-2.500-4-3.500-9-3M14.500 1.500L11 4l3.500 2.500" />
      </ToolButton>
      <ToolButton label="Rotate right">
        <rect x="5" y="8.5" width="15" height="12" rx="2" />
        <path d="M3 7c1-2.500 4-3.500 9-3M9.500 1.500L13 4 9.500 6.500" />
      </ToolButton>
      <Separator />
      <ToolButton label="Paint">
        <path d="M5 3.500h12v5H5zM17 5.500h3v5h-8v3M10.500 14h3v6h-3z" />
      </ToolButton>
      <Separator />
      <ToolButton label="Mirror">
        <path d="M3.500 4.500l5 3.500v8l-5 3.500zM20.500 4.500l-5 3.500v8l5 3.500zM12 4v16" strokeWidth="1.3" />
      </ToolButton>
      <ToolButton label="Lamp" active>
        <g stroke="#f5102a">
          <path d="M12 3v3M3.500 14c0-5 4-8 8.500-8s8.500 3 8.500 8zM8.500 15.500c1 2.500 6 2.500 7 0M6 16.500l-2 2M18 16.500l2 2M9 19l-1 2M12 19v2.500M15 19l1 2" />
        </g>
      </ToolButton>
      <button type="button" className="w-6 shrink-0 text-[15px] leading-6">
        3D
      </button>
      <ToolButton label="Diode" active>
        <path d="M0 12h24" stroke="#4288ff" />
        <path d="M8 6l11 6-11 6z" fill="#4288ff" stroke="#4288ff" />
        <path d="M19.500 6v12" stroke="#4288ff" />
      </ToolButton>
      <ToolButton label="Nets" active>
        <rect x="2.5" y="2.5" width="19" height="19" rx="2" strokeWidth="1.2" />
        <path d="M10 9l11 10" stroke="#2fb35c" strokeWidth="1.2" />
        <circle cx="8.5" cy="7.5" r="1.8" stroke="#2fb35c" strokeWidth="1.2" />
        <path d="M16 6c2 .5 3 2 3 5" stroke="#4288ff" strokeWidth="1.2" />
        <circle cx="14" cy="6" r="1.5" stroke="#4288ff" strokeWidth="1.2" />
        <path d="M7 14l4 2 1 5" stroke="#f03a4e" strokeWidth="1.2" />
        <circle cx="5.5" cy="13" r="1.6" stroke="#f03a4e" strokeWidth="1.2" />
      </ToolButton>
      <ToolButton label="Curve">
        <path d="M5 17c1-6 5-10 12-11" />
        <circle cx="5" cy="19" r="2" />
        <circle cx="19" cy="5.5" r="2" />
      </ToolButton>
      <ToolButton label="Pad colours">
        <g stroke="none">
          <circle cx="7.5" cy="5" r="2.5" fill="#ffb300" />
          <circle cx="17" cy="5" r="2.5" fill="#ffb300" />
          <circle cx="7.5" cy="12" r="2.5" fill="#7c8a00" />
          <circle cx="17" cy="12" r="2.5" fill="#7c8a00" />
          <circle cx="7.5" cy="18.5" r="2.5" fill="#c80000" />
          <circle cx="17" cy="18.5" r="2.5" fill="#c80000" />
        </g>
      </ToolButton>
      <Separator />
      <ToolButton label="Mouse">
        <rect x="6" y="4" width="12.5" height="16.5" rx="5.5" />
        <path d="M6 11h12.500M12 4v3" />
        <rect x="11" y="6.5" width="2.5" height="5" rx="1" />
      </ToolButton>
      <Separator />
      <button
        type="button"
        className="h-[22px] w-[109px] shrink-0 border border-red-600 text-center text-sm leading-5 whitespace-nowrap"
      >
        [ColorScheme]
      </button>
      <Separator />
      <ToolButton label="Visibility">
        <g stroke="#3f7fe0" strokeWidth="1.2">
          <path d="M3 12c4-8 14-8 18 0-4 8-14 8-18 0z" />
          <circle cx="12" cy="12" r="4" />
          <circle cx="12" cy="12" r="1.5" />
        </g>
      </ToolButton>
      <Separator />
      <button type="button" className="size-6 shrink-0 rounded-[3px] border border-[#999] text-[15px] leading-5">
        1
      </button>
      <button type="button" className="size-6 shrink-0 rounded-[3px] border border-[#999] text-[15px] leading-5">
        2
      </button>
      <button type="button" aria-label="Side panel" className="ml-auto">
        <svg viewBox="0 0 22 18" className="h-[18px] w-[22px]" fill="none" stroke="#777" strokeWidth="1.6">
          <path d="M1 1h20v16H1zM7 1v16M11 5.500h6M11 9h6M11 12.500h6" />
        </svg>
      </button>
    </div>
  );
}

function Handle({ label, flip }: { label: string; flip?: boolean }) {
  return (
    <button type="button" aria-label={label} className="block h-[111px] w-[9px]">
      <svg viewBox="0 0 9 111" className="h-full w-full">
        <path
          d={flip ? "M9 1L0 14v83l9 13z" : "M0 1l9 13v83l-9 13z"}
          fill="#d6ebfd"
          stroke="#8cc5f2"
          strokeWidth="0.8"
        />
        <path d="M5.500 50.500l-3 3 3 3" fill="none" stroke="#4aa3e8" strokeWidth="1.2" />
      </svg>
    </button>
  );
}

function Logo() {
  return (
    <svg viewBox="0 0 30 30" className="size-[30px]">
      <rect width="30" height="30" rx="4" fill="#fff" />
      <rect x="8.5" y="2" width="13" height="21" rx="2" fill="#f4511e" />
      <path d="M8.500 13h13v8a2 2 0 0 1-2 2h-9a2 2 0 0 1-2-2z" fill="#13294f" />
      <rect x="10.5" y="5" width="9" height="15" fill="#fff" />
      <path d="M9 6C3 6 0 10 2 13s8 5 12 5" fill="none" stroke="#13294f" strokeWidth="1.8" />
      <path d="M21 8c6 1 9 4 7 7s-7 3-11 2" fill="none" stroke="#e53b1c" strokeWidth="1.8" />
      <circle cx="14" cy="13" r="3" fill="none" stroke="#13294f" strokeWidth="1.5" />
      <circle cx="18" cy="10" r="1" fill="#e53b1c" />
      <text x="15" y="28.5" textAnchor="middle" fill="#13294f" className="font-['Liberation_Sans',sans-serif] text-[4px] font-bold">
        DZKJ TOOLS
      </text>
    </svg>
  );
}

function TitleBar() {
  return (
    <header className="flex h-10 items-center bg-[linear-gradient(90deg,#2196ff_0,#2a72ff_18%,#2f74ff_35%,#2f82ff_55%,#2d9fff_100%)] pr-4 pl-2.5 text-[15px] text-white">
      <Logo />
      <h1 className="ml-2.5 text-[15px]">DZKJ Schematics [ VIP Due date: 2029-10-31 00:00:00 ]</h1>
      <div className="ml-auto flex items-center">
        <button type="button" aria-label="Toolbox">
          <svg viewBox="0 0 18 18" className="size-[18px]" fill="none" stroke="#e8dc4a" strokeWidth="1.6">
            <path d="M2 5h14v11H2zM6 5l1-3h4l1 3M5 9.500h8" strokeLinejoin="round" />
          </svg>
        </button>
        <div className="mr-3 ml-2.5 h-5 w-px bg-white/40" />
        <div className="flex gap-3">
          <button type="button" aria-label="Minimize">
            <svg viewBox="0 0 18 18" className="size-[18px]" stroke="#fff" strokeWidth="2">
              <path d="M1 9h16" />
            </svg>
          </button>
          <button type="button" aria-label="Maximize">
            <svg viewBox="0 0 18 18" className="size-[18px]" fill="none" stroke="#fff" strokeWidth="1.8">
              <rect x="2" y="2" width="14" height="14" rx="3" />
            </svg>
          </button>
          <button type="button" aria-label="Close">
            <svg viewBox="0 0 18 18" className="size-[18px]" stroke="#fff" strokeWidth="2">
              <path d="M1.500 1.500l15 15M16.500 1.500l-15 15" />
            </svg>
          </button>
        </div>
      </div>
    </header>
  );
}

const menus = ["File(F)", "VIP(V)", "Tool(T)", "Settings(S)", "PCB View settings(S)"];

export default function App() {
  return (
    <div className="flex h-screen flex-col overflow-hidden bg-white font-['Open_Sans','Noto_Sans',sans-serif] text-[15px] text-black">
      <TitleBar />
      <nav className="flex h-8 items-center gap-4 border-b border-[#d9d9d9] bg-[#efefef] px-[18px] pt-0.5">
        {menus.map((menu) => (
          <button key={menu} type="button" className="whitespace-nowrap">
            {menu}
          </button>
        ))}
      </nav>
      <div className="flex min-h-0 flex-1">
        <aside className="flex w-[431px] shrink-0 flex-col border-r border-[#d9d9d9]">
          <div className="flex h-10 items-center border-b border-[#dcdcdc] px-[5px]">
            <button type="button" className="h-[30px] w-[49px] rounded-[3px] border border-[#d4d7de] whitespace-nowrap">
              Shrink
            </button>
            <label className="ml-2.5 flex h-[30px] w-[302px] items-center rounded-[3px] border border-[#d4d7de] pr-2.5 pl-2">
              <input
                aria-label="Model number or PCB"
                placeholder="Please input the model number or PCB"
                className="min-w-0 flex-1 text-sm outline-none placeholder:text-[#c0c4cc]"
              />
              <svg viewBox="0 0 12 8" className="ml-1 h-2 w-3" fill="none" stroke="#999" strokeWidth="1.4">
                <path d="M0 1l6 6 6-6" />
              </svg>
            </label>
            <button
              type="button"
              aria-label="Search"
              className="ml-2.5 flex h-[30px] w-[49px] items-center justify-center rounded-[3px] bg-[#4f97ff]"
            >
              <svg viewBox="0 0 20 20" className="size-5" fill="none" stroke="#fff" strokeWidth="1.8">
                <circle cx="10" cy="10" r="8.5" />
                <path d="M15.500 15.500l3.500 3.500" />
              </svg>
            </button>
          </div>
          <div className="flex min-h-0 flex-1 pb-1.5">
            <Rail />
            <Tree />
          </div>
        </aside>
        <div className="flex w-[9px] shrink-0 flex-col justify-center pt-[19px]">
          <Handle label="Collapse tree" />
        </div>
        <main className="flex min-w-0 flex-1 flex-col border-l border-[#dcdcdc]">
          <div className="flex h-[34px] items-center gap-[5px] border-b border-[#dcdcdc] bg-[#fafafa] pr-[11px] pl-2">
            <button
              type="button"
              className="flex h-6 w-[139px] items-center gap-1 rounded-[3px] border border-[#888] pl-[5px] text-sm leading-5 whitespace-nowrap text-[#777]"
            >
              <svg viewBox="0 0 18 18" className="size-[18px] shrink-0" fill="none" stroke="#222" strokeWidth="1.4">
                <path d="M1 9.500L9 1.500l8 8M3.500 8v9h11V8M7.500 17v-5h3v5" />
              </svg>
              Member Center
            </button>
            <button
              type="button"
              className="h-6 w-[310px] rounded-[3px] border border-black text-center text-[15px] leading-5 font-bold whitespace-nowrap"
            >
              realme 10S-2AB464-1 YiDianTong.pcb
            </button>
            <button type="button" aria-label="Close all" className="ml-auto">
              <svg viewBox="0 0 18 18" className="size-[18px]">
                <path d="M1.200 14V1.200H15" fill="none" stroke="#777" strokeWidth="2" />
                <rect x="4" y="4.5" width="14" height="13.5" rx="2" fill="#777" />
                <path d="M8.500 8.500l5 5M13.500 8.500l-5 5" stroke="#fff" strokeWidth="1.8" />
              </svg>
            </button>
          </div>
          <div className="flex min-h-0 flex-1">
            <div className="flex min-w-0 flex-1 flex-col">
              <Toolbar />
              <div className="min-h-0 flex-1">
                <BoardView />
              </div>
            </div>
            <div className="flex w-2.5 shrink-0 flex-col justify-center border-l border-[#dcdcdc] bg-[#fafafa] pt-9">
              <Handle label="Open side panel" flip />
            </div>
          </div>
        </main>
      </div>
      <footer className="flex h-5 items-center justify-center bg-[#0090d8] font-['DejaVu_Sans_Mono',monospace] text-[15px] text-white">
        DZKJ Schematics https://www.dzkj16888.com
      </footer>
    </div>
  );
}
